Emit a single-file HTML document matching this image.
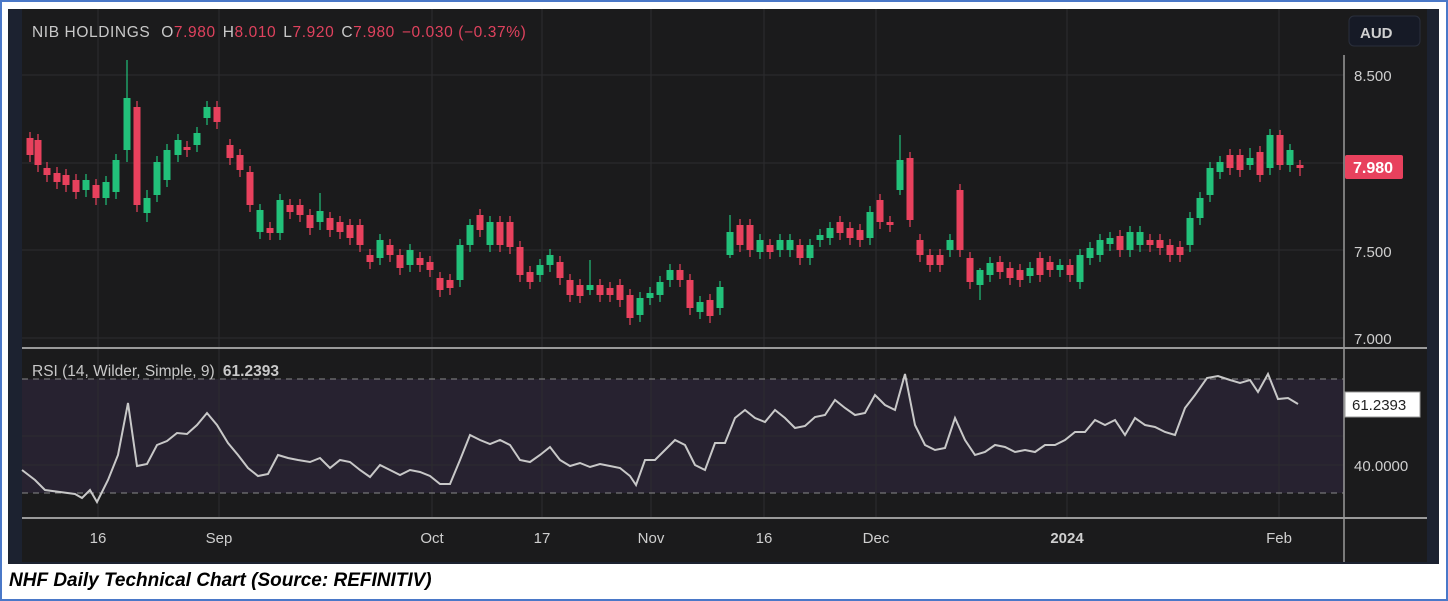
<!DOCTYPE html>
<html><head><meta charset="utf-8"><style>
html,body{margin:0;padding:0;width:1448px;height:601px;overflow:hidden;background:#fff}
.frame{position:absolute;left:0;top:0;width:1444px;height:597px;border:2px solid #4a78c8;}
svg{position:absolute;left:0;top:0}
.cap{position:absolute;left:9px;top:570px;font:italic bold 19px "Liberation Sans",sans-serif;color:#000}
</style></head><body>
<div class="frame"></div>
<svg id="s" width="1448" height="601" xmlns="http://www.w3.org/2000/svg" font-family="Liberation Sans, sans-serif">
<rect x="8" y="9" width="1431" height="555" fill="#1c2230"/>
<rect x="22" y="9" width="1405" height="553" fill="#1b1b1c"/>
<rect x="22" y="379" width="1322" height="114" fill="#272230"/>
<g id="grid" stroke="#2c2c2f" stroke-width="1"></g>
<line x1="22" y1="348" x2="1427" y2="348" stroke="#9a9a9a" stroke-width="2"/>
<line x1="22" y1="518" x2="1427" y2="518" stroke="#9a9a9a" stroke-width="2"/>
<line x1="1344" y1="55" x2="1344" y2="562" stroke="#9a9a9a" stroke-width="1.5"/>
<line x1="22" y1="379" x2="1344" y2="379" stroke="#8a8a8a" stroke-dasharray="6,5"/>
<line x1="22" y1="493" x2="1344" y2="493" stroke="#8a8a8a" stroke-dasharray="6,5"/>
<g id="c"></g>
<polyline id="rsi" fill="none" stroke="#c8c8c8" stroke-width="2"/>
<text x="32" y="37" font-size="15.5" fill="#c9c9c9" letter-spacing="0.6">NIB HOLDINGS <tspan dx="6">O</tspan><tspan fill="#e0425e">7.980</tspan><tspan dx="7">H</tspan><tspan fill="#e0425e">8.010</tspan><tspan dx="7">L</tspan><tspan fill="#e0425e">7.920</tspan><tspan dx="7">C</tspan><tspan fill="#e0425e">7.980</tspan><tspan dx="7" fill="#e0425e">−0.030 (−0.37%)</tspan></text>
<rect x="1349" y="16" width="71" height="30" rx="5" fill="#161a26" stroke="#2a2f3c"/>
<text x="1360" y="38" font-size="15" fill="#d0d0d0" font-weight="bold">AUD</text>
<g font-size="15" fill="#cfcfcf">
<text x="1354" y="81">8.500</text><text x="1354" y="257">7.500</text><text x="1354" y="344">7.000</text>
<text x="1354" y="471">40.0000</text>
<text x="32" y="376" fill="#c9c9c9" font-size="15.5">RSI (14, Wilder, Simple, 9) <tspan font-weight="bold" dx="4">61.2393</tspan></text>
<text x="98" y="543" text-anchor="middle">16</text><text x="219" y="543" text-anchor="middle">Sep</text>
<text x="432" y="543" text-anchor="middle">Oct</text><text x="542" y="543" text-anchor="middle">17</text>
<text x="651" y="543" text-anchor="middle">Nov</text><text x="764" y="543" text-anchor="middle">16</text>
<text x="876" y="543" text-anchor="middle">Dec</text><text x="1067" y="543" text-anchor="middle" font-weight="bold">2024</text>
<text x="1279" y="543" text-anchor="middle">Feb</text>
</g>
<rect x="1345" y="155" width="58" height="24" rx="2" fill="#e8415d"/>
<text x="1353" y="173" font-size="16" fill="#fff" font-weight="bold">7.980</text>
<rect x="1345" y="392" width="75" height="25" fill="#fff" stroke="#999"/>
<text x="1352" y="410" font-size="15" fill="#222">61.2393</text>
</svg>
<div class="cap">NHF Daily Technical Chart (Source: REFINITIV)</div>
<script>
var ns="http://www.w3.org/2000/svg";
function el(p,t,a){var e=document.createElementNS(ns,t);for(var k in a)e.setAttribute(k,a[k]);p.appendChild(e);return e;}
var g=document.getElementById('grid');
[98,219,432,542,651,764,876,1067,1279].forEach(function(x){el(g,'line',{x1:x,y1:9,x2:x,y2:518});});
[75,163,250,338,436,465].forEach(function(y){el(g,'line',{x1:22,y1:y,x2:1344,y2:y});});
var d=[[30,'r',138,155],[38,'r',140,165],[47,'r',168,175],[57,'r',173,182],[66,'r',175,185],[76,'r',180,192],[86,'g',180,190],[96,'r',185,198],[106,'g',182,198],[116,'g',160,192],[127,'g',98,150,60,162],[137,'r',107,205],[147,'g',198,213,190,222],[157,'g',162,195],[167,'g',150,180],[178,'g',140,155],[187,'r',147,150],[197,'g',133,145],[207,'g',107,118],[217,'r',107,122],[230,'r',145,158],[240,'r',155,170],[250,'r',172,205],[260,'g',210,232],[270,'r',228,233],[280,'g',200,233],[290,'r',205,212],[300,'r',205,215],[310,'r',215,228],[320,'g',211,222,193,230],[330,'r',218,230],[340,'r',222,232],[350,'r',225,238],[360,'r',225,245],[370,'r',255,262],[380,'g',240,258],[390,'r',245,255],[400,'r',255,268],[410,'g',250,265],[420,'r',258,265],[430,'r',262,270],[440,'r',278,290],[450,'r',280,288],[460,'g',245,280],[470,'g',225,245],[480,'r',215,230],[490,'g',222,245],[500,'r',222,245],[510,'r',222,247],[520,'r',247,275],[530,'r',272,282],[540,'g',265,275],[550,'g',255,265],[560,'r',262,278],[570,'r',280,295],[580,'r',285,296],[590,'g',285,290,260,295],[600,'r',285,295],[610,'r',288,295],[620,'r',285,300],[630,'r',295,318],[640,'g',298,315],[650,'g',293,298],[660,'g',282,295],[670,'g',270,280],[680,'r',270,280],[690,'r',280,308],[700,'g',302,312],[710,'r',300,316],[720,'g',287,308],[730,'g',232,255,215,258],[740,'r',225,245],[750,'r',225,250],[760,'g',240,252],[770,'r',245,252],[780,'g',240,250],[790,'g',240,250],[800,'r',245,258],[810,'g',245,258],[820,'g',235,240],[830,'g',228,238],[840,'r',222,233],[850,'r',228,238],[860,'r',230,240],[870,'g',212,238],[880,'r',200,222],[890,'r',222,225],[900,'g',160,190,135,195],[910,'r',158,220],[920,'r',240,255],[930,'r',255,265],[940,'r',255,265],[950,'g',240,250],[960,'r',190,250],[970,'r',258,282],[980,'g',270,285,268,300],[990,'g',263,275],[1000,'r',262,272],[1010,'r',268,278],[1020,'r',270,280],[1030,'g',268,276],[1040,'r',258,275],[1050,'r',262,270],[1060,'g',265,270],[1070,'r',265,275],[1080,'g',255,282],[1090,'g',248,258],[1100,'g',240,255],[1110,'g',238,244],[1120,'r',236,250],[1130,'g',232,250],[1140,'g',232,245],[1150,'r',240,245],[1160,'r',240,248],[1170,'r',245,255],[1180,'r',247,255],[1190,'g',218,245],[1200,'g',198,218],[1210,'g',168,195],[1220,'g',162,172],[1230,'r',155,168],[1240,'r',155,170],[1250,'g',158,165,148,170],[1260,'r',152,175],[1270,'g',135,168],[1280,'r',135,165,130,170],[1290,'g',150,165],[1300,'r',165,168,160,176]];
var c=document.getElementById('c');
d.forEach(function(k){var col=k[1]=='g'?'#22c17a':'#e8415d';var hi=k[4]||k[2]-6,lo=k[5]||k[3]+7;
el(c,'line',{x1:k[0],y1:hi,x2:k[0],y2:lo,stroke:col,'stroke-width':1.2});
el(c,'rect',{x:k[0]-3.5,y:k[2],width:7,height:Math.max(2,k[3]-k[2]),fill:col});});
var r=[[22,470],[35,480],[45,490],[60,492],[75,494],[82,498],[90,490],[97,502],[108,480],[118,455],[128,403],[137,466],[147,464],[157,445],[167,441],[177,433],[187,434],[197,425],[207,413],[217,425],[228,443],[238,455],[248,468],[258,476],[268,474],[278,455],[288,458],[298,460],[310,462],[320,458],[330,468],[340,460],[350,462],[360,470],[370,477],[380,465],[390,470],[400,475],[410,470],[420,472],[430,476],[440,484],[450,484],[460,460],[470,435],[480,440],[490,444],[500,440],[510,445],[520,460],[530,462],[540,455],[550,447],[560,460],[570,466],[580,463],[590,467],[600,464],[610,466],[620,468],[630,476],[636,485],[645,460],[655,460],[665,450],[675,440],[685,445],[695,465],[705,470],[715,443],[725,443],[735,418],[745,410],[755,418],[765,422],[775,410],[785,418],[795,428],[805,426],[815,417],[825,415],[835,400],[845,408],[855,415],[865,413],[875,395],[885,405],[895,410],[905,374],[915,425],[925,445],[935,450],[945,448],[955,418],[965,440],[975,455],[985,452],[995,445],[1005,447],[1015,452],[1025,450],[1035,452],[1045,445],[1055,445],[1065,440],[1075,432],[1085,432],[1095,420],[1105,425],[1115,420],[1125,435],[1135,418],[1145,425],[1155,427],[1165,432],[1175,435],[1185,408],[1195,395],[1207,378],[1218,376],[1230,380],[1240,383],[1250,380],[1258,392],[1268,374],[1278,399],[1288,398],[1298,404]];
document.getElementById('rsi').setAttribute('points',r.map(function(p){return p.join(',')}).join(' '));
</script>
</body></html>
